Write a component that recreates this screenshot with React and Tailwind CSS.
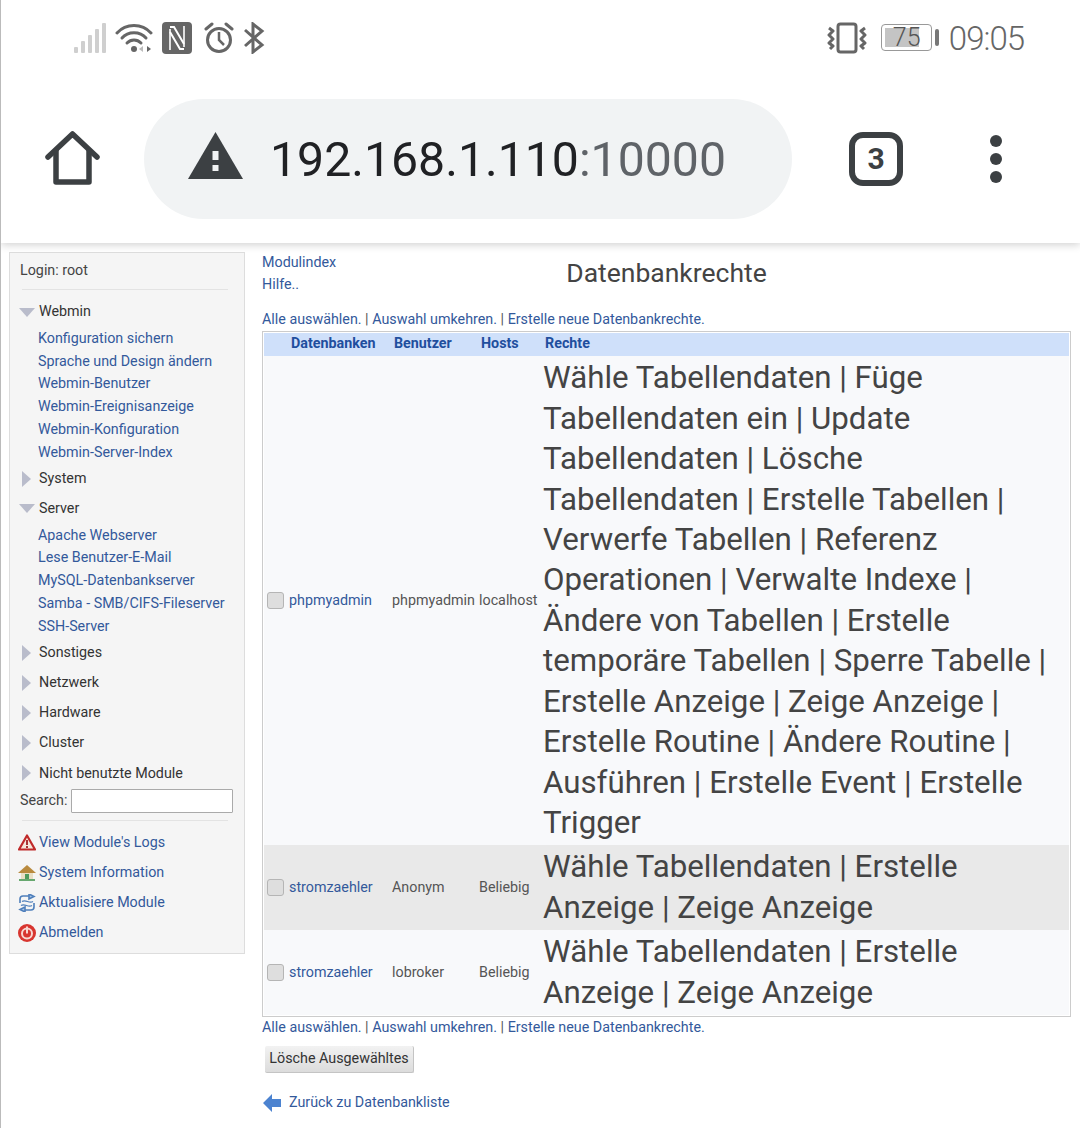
import React from "react";

const Link = ({ children, className = "" }) => (
  <a className={"text-[#33599b] " + className}>{children}</a>
);

const Signal = () => (
  <svg width="34" height="32" viewBox="0 0 34 32" fill="#cfcfcf">
    <rect x="1" y="25" width="4" height="6" rx="1" />
    <rect x="8" y="19" width="4" height="12" rx="1" />
    <rect x="15" y="13" width="4" height="18" rx="1" />
    <rect x="22" y="7" width="4" height="24" rx="1" />
    <rect x="29" y="1" width="4" height="30" rx="1" />
  </svg>
);

const Wifi = () => (
  <svg width="38" height="32" viewBox="0 0 38 32" fill="none" stroke="#666" strokeWidth="3" strokeLinecap="round">
    <path d="M2 11C11 1 27 1 36 11" />
    <path d="M7 16C13 9 25 9 31 16" />
    <path d="M12 21C16 17 22 17 26 21" />
    <circle cx="19" cy="27" r="3" fill="#666" stroke="none" />
    <path d="M28 30V24L24 27Z" fill="#bbb" stroke="none" />
    <path d="M32 24V30L36 27Z" fill="#666" stroke="none" />
  </svg>
);

const Nfc = () => (
  <svg width="30" height="32" viewBox="0 0 30 32">
    <rect x="0" y="0" width="30" height="32" rx="4" fill="#666" />
    <path d="M8 7V28M22 4V25" fill="none" stroke="#fff" strokeWidth="1.6" />
    <path d="M8 5H12L22 22M22 27H18L8 10" fill="none" stroke="#fff" strokeWidth="2" />
  </svg>
);

const Alarm = () => (
  <svg width="32" height="32" viewBox="0 0 32 32" fill="none" stroke="#666" strokeWidth="3">
    <circle cx="16" cy="18" r="11.5" />
    <path d="M16 10V18L21 23" strokeWidth="2.5" />
    <path d="M3 7L9 2" strokeLinecap="round" />
    <path d="M29 7L23 2" strokeLinecap="round" />
  </svg>
);

const Bluetooth = () => (
  <svg width="22" height="32" viewBox="0 0 22 32" fill="none" stroke="#666" strokeWidth="3">
    <path d="M2 8L19 23L10 30V2L19 9L2 24" />
  </svg>
);

const Vibrate = () => (
  <svg width="40" height="32" viewBox="0 0 40 32" fill="none" stroke="#666">
    <rect x="11" y="2" width="18" height="28" rx="2.5" strokeWidth="3" />
    <path d="M2 6L6 9L2 13L6 17L2 21L6 24L3 27" strokeWidth="3" strokeLinejoin="round" />
    <path d="M38 6L34 9L38 13L34 17L38 21L34 24L37 27" strokeWidth="3" strokeLinejoin="round" />
  </svg>
);

const Battery = () => (
  <div className="flex items-center gap-[3px]">
    <div className="relative w-[51px] h-[27px] rounded-[4px] border border-[#999] p-[3px]">
      <div className="h-full w-[34px] bg-[#c4c4c4]" />
      <span className="absolute inset-0 pl-[11px] text-[25px] leading-[25px] font-light text-[#555]">75</span>
    </div>
    <div className="w-[4px] h-[17px] rounded-[2px] bg-[#777]" />
  </div>
);

const Home = () => (
  <svg width="55" height="55" viewBox="0 0 55 55" fill="none" stroke="#3c4043" strokeWidth="5.5" strokeLinejoin="round" strokeLinecap="round">
    <path d="M3 26L27.5 3L52 26" />
    <path d="M11 20V51H44V20" />
  </svg>
);

const Warn = () => (
  <svg width="55" height="47" viewBox="0 0 55 47" className="mb-[6px]">
    <path d="M27.5 0L55 47H0Z" fill="#3c4043" />
    <rect x="24.5" y="19" width="6" height="9" fill="#f1f3f4" />
    <rect x="24.5" y="33" width="6" height="6" fill="#f1f3f4" />
  </svg>
);

const Down = () => (
  <svg width="16" height="9" viewBox="0 0 16 9" className="-ml-px mr-[4px] shrink-0">
    <path d="M0 0H16L8 9Z" fill="#b9bccb" />
  </svg>
);
const Right = () => (
  <svg width="9" height="16" viewBox="0 0 9 16" className="ml-[2px] mr-[8px] shrink-0">
    <path d="M0 0L9 8L0 16Z" fill="#b9bccb" />
  </svg>
);

const Cat = ({ label, open }) => (
  <div className="flex items-center h-[30.2px] text-[14.3px] text-[#333]">
    {open ? <Down /> : <Right />}
    <span>{label}</span>
  </div>
);

const SubLinks = ({ items }) => (
  <div className="pl-[18px] -mt-[0.4px]">
    {items.map((t) => (
      <div key={t} className="h-[22.8px] leading-[22.8px] text-[14.3px]">
        <Link>{t}</Link>
      </div>
    ))}
  </div>
);

const LogIcon = () => (
  <svg width="18" height="17" viewBox="0 0 18 17">
    <path d="M9 1.5L17 15.5H1Z" fill="#f6e8dc" stroke="#c02a2a" strokeWidth="2.2" strokeLinejoin="round" />
    <rect x="8" y="6" width="2" height="5" fill="#a33" />
    <rect x="8" y="12" width="2" height="2" fill="#a33" />
  </svg>
);
const HouseIcon = () => (
  <svg width="18" height="17" viewBox="0 0 18 17">
    <path d="M0 9L9 1L18 9Z" fill="#b98a3e" />
    <rect x="3" y="9" width="12" height="7" fill="#e9dfc4" />
    <rect x="7" y="10" width="4" height="6" fill="#4f9a5c" />
    <rect x="1" y="15" width="16" height="2" fill="#67a86f" />
  </svg>
);
const RefreshIcon = () => (
  <svg width="18" height="18" viewBox="0 0 18 18" fill="none" stroke="#4f7fbb" strokeWidth="1.6">
    <path d="M2 9V5C2 3 3 2 5 2H13" />
    <path d="M11 0L16 2.5L11 5Z" fill="#a9c6e6" />
    <path d="M16 9V13C16 15 15 16 13 16H5" />
    <path d="M7 13L2 15.5L7 18Z" fill="#a9c6e6" />
    <path d="M4 7.5C8 5 11 10 15 7.5M3 11.5C7 9 10 14 14 11.5" strokeWidth="1.3" />
  </svg>
);
const PowerIcon = () => (
  <svg width="18" height="18" viewBox="0 0 18 18">
    <circle cx="9" cy="9" r="9" fill="#d8352f" />
    <circle cx="9" cy="9.5" r="5" fill="none" stroke="#f7d7d2" strokeWidth="2" />
    <rect x="8" y="2.5" width="2" height="7" fill="#f7d7d2" />
  </svg>
);

const Bottom = ({ icon, label }) => (
  <div className="flex items-center h-[30px] text-[14.3px]">
    <span className="-ml-[2px] w-[21px] flex shrink-0">{icon}</span>
    <Link>{label}</Link>
  </div>
);

const Sidebar = () => (
  <aside className="w-[236px] h-[702px] shrink-0 bg-[#f5f5f5] border border-[#dddddd] px-[10px] pt-[6px]">
    <div className="text-[14.3px] leading-[22px] text-[#444]">Login: root</div>
    <div className="h-px bg-[#e3e3e3] mx-[2px] mt-[8px] mb-[7px] w-[206px]" />
    <Cat label="Webmin" open />
    <SubLinks items={["Konfiguration sichern", "Sprache und Design ändern", "Webmin-Benutzer", "Webmin-Ereignisanzeige", "Webmin-Konfiguration", "Webmin-Server-Index"]} />
    <Cat label="System" />
    <Cat label="Server" open />
    <SubLinks items={["Apache Webserver", "Lese Benutzer-E-Mail", "MySQL-Datenbankserver", "Samba - SMB/CIFS-Fileserver", "SSH-Server"]} />
    <Cat label="Sonstiges" />
    <Cat label="Netzwerk" />
    <Cat label="Hardware" />
    <Cat label="Cluster" />
    <Cat label="Nicht benutzte Module" />
    <div className="flex items-center h-[24px] text-[14.3px] text-[#444] mt-[0.4px]">
      <span className="w-[51px] shrink-0">Search:</span>
      <input className="w-[162px] h-[24px] bg-white border border-[#aaaaaa] rounded-[1px] outline-none" />
    </div>
    <div className="h-px bg-[#e3e3e3] ml-[2px] mt-[7px] mb-[7px] w-[206px]" />
    <Bottom icon={<LogIcon />} label="View Module's Logs" />
    <Bottom icon={<HouseIcon />} label="System Information" />
    <Bottom icon={<RefreshIcon />} label="Aktualisiere Module" />
    <Bottom icon={<PowerIcon />} label="Abmelden" />
  </aside>
);

const ActionLinks = () => (
  <div className="text-[14.3px] leading-[20px] text-[#555]">
    <Link>Alle auswählen.</Link> | <Link>Auswahl umkehren.</Link> | <Link>Erstelle neue Datenbankrechte.</Link>
  </div>
);

const Row = ({ db, user, host, rights, bg }) => (
  <tr className={bg}>
    <td className="p-[2px] pl-[3px] align-middle">
      <div className="flex items-center gap-[5px]">
        <input type="checkbox" className="appearance-none w-[17px] h-[17px] rounded-[3px] bg-[#dedede] border border-[#b5b5b5] shrink-0" />
        <Link>{db}</Link>
      </div>
    </td>
    <td className="p-[2px] pl-[4px] align-middle text-[#555]">{user}</td>
    <td className="p-[2px] align-middle text-[#555]">{host}</td>
    <td className="p-[2px] pr-[15px] align-middle text-[31.25px] leading-[40.4px] text-[#444]">{rights}</td>
  </tr>
);

const BackArrow = () => (
  <svg width="18" height="18" viewBox="0 0 18 18">
    <path d="M0 9L9 0V5H18V13H9V18Z" fill="#4c83d0" />
  </svg>
);

export default function App() {
  return (
    <div className="w-[1080px] h-[1128px] overflow-hidden bg-white border-l border-[#bbbbbb] font-['Roboto',sans-serif]">
      <header className="h-[243px] bg-white shadow-[0_2px_8px_rgba(0,0,0,0.18)] relative">
        <div className="h-[76px] pt-[22px] pl-[72px] pr-[56px] flex items-start justify-between">
          <div className="flex items-start">
            <Signal />
            <div className="ml-[8px]"><Wifi /></div>
            <div className="ml-[9px]"><Nfc /></div>
            <div className="ml-[11px]"><Alarm /></div>
            <div className="ml-[8px]"><Bluetooth /></div>
          </div>
          <div className="flex items-start">
            <div className="mr-[14px]"><Vibrate /></div>
            <div className="mt-[2px] mr-[10px]"><Battery /></div>
            <span className="text-[33px] leading-[33px] font-light text-[#666] tracking-[-1px]">09:05</span>
          </div>
        </div>
        <div className="flex items-center h-[165px] pl-[44px]">
          <Home />
          <div className="ml-[44px] w-[648px] h-[120px] rounded-[60px] bg-[#f1f3f4] flex items-center pl-[44px]">
            <Warn />
            <span className="ml-[27px] mt-[3px] text-[48.2px] leading-none text-[#202124]">
              192.168.1.110<span className="text-[#5f6368]">:10000</span>
            </span>
          </div>
          <div className="ml-[57px] w-[54px] h-[54px] rounded-[14px] border-[6px] border-[#3c4043] flex items-center justify-center text-[30px] font-bold text-[#3c4043]">
            3
          </div>
          <div className="ml-[87px] flex flex-col gap-[6px]">
            <div className="w-[12px] h-[12px] rounded-full bg-[#3c4043]" />
            <div className="w-[12px] h-[12px] rounded-full bg-[#3c4043]" />
            <div className="w-[12px] h-[12px] rounded-full bg-[#3c4043]" />
          </div>
        </div>
      </header>

      <div className="flex pl-[8px] pt-[9px]">
        <Sidebar />
        <main className="ml-[17px] w-[809px] text-[14.3px]">
          <div className="grid grid-cols-[1fr_auto_1fr] h-[55px]">
            <div className="leading-[22px] -mt-px">
              <div><Link>Modulindex</Link></div>
              <div><Link>Hilfe..</Link></div>
            </div>
            <h1 className="text-[26.5px] leading-[30px] text-[#444] pt-[6px]">Datenbankrechte</h1>
            <div />
          </div>
          <div className="mt-[2px]"><ActionLinks /></div>
          <table className="table-fixed w-[809px] border-separate border-spacing-0 border border-[#cccccc] p-px bg-white mt-[2px]">
            <colgroup>
              <col className="w-[124px]" />
              <col className="w-[89px]" />
              <col className="w-[64px]" />
              <col className="w-[528px]" />
            </colgroup>
            <thead>
              <tr className="bg-[#cfe0fa] text-[#1f4f9e] font-bold h-[23px]">
                <th className="text-left font-bold pl-[27px] pb-[2px]">Datenbanken</th>
                <th className="text-left font-bold pl-[6px] pb-[2px]">Benutzer</th>
                <th className="text-left font-bold pl-[4px] pb-[2px]">Hosts</th>
                <th className="text-left font-bold pl-[4px] pb-[2px]">Rechte</th>
              </tr>
            </thead>
            <tbody>
              <Row
                bg="bg-[#f8f9fb]"
                db="phpmyadmin"
                user="phpmyadmin"
                host="localhost"
                rights="Wähle Tabellendaten | Füge Tabellendaten ein | Update Tabellendaten | Lösche Tabellendaten | Erstelle Tabellen | Verwerfe Tabellen | Referenz Operationen | Verwalte Indexe | Ändere von Tabellen | Erstelle temporäre Tabellen | Sperre Tabelle | Erstelle Anzeige | Zeige Anzeige | Erstelle Routine | Ändere Routine | Ausführen | Erstelle Event | Erstelle Trigger"
              />
              <Row
                bg="bg-[#e9e9e9]"
                db="stromzaehler"
                user="Anonym"
                host="Beliebig"
                rights="Wähle Tabellendaten | Erstelle Anzeige | Zeige Anzeige"
              />
              <Row
                bg="bg-[#f8f9fb]"
                db="stromzaehler"
                user="lobroker"
                host="Beliebig"
                rights="Wähle Tabellendaten | Erstelle Anzeige | Zeige Anzeige"
              />
            </tbody>
          </table>
          <ActionLinks />
          <button className="block mt-[9px] ml-[3px] h-[27px] w-[149px] rounded-[2px] bg-gradient-to-b from-[#f2f2f2] to-[#dcdcdc] border-b border-r border-[#c4c4c4] text-[14.3px] text-[#333]">
            Lösche Ausgewähltes
          </button>
          <div className="mt-[19px] ml-px flex items-center gap-[8px]">
            <BackArrow />
            <Link>Zurück zu Datenbankliste</Link>
          </div>
        </main>
      </div>
    </div>
  );
}
